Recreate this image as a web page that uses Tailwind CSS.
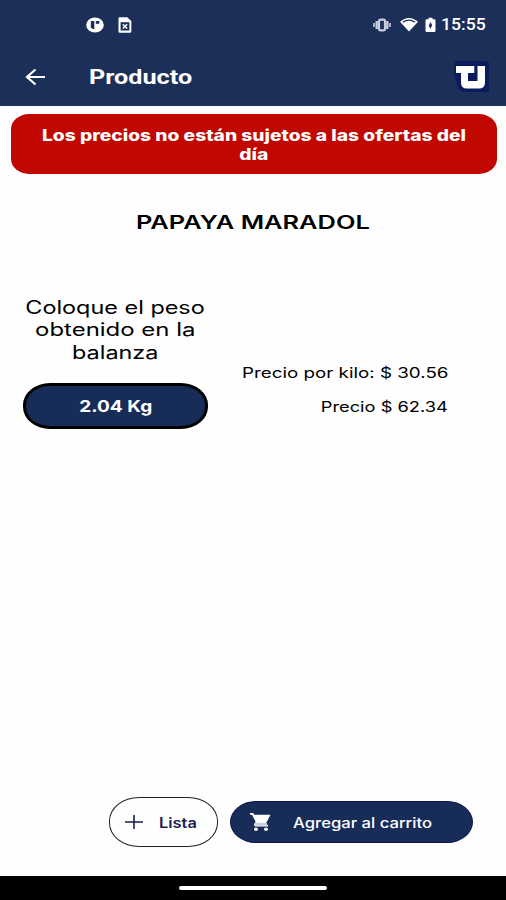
<!DOCTYPE html>
<html lang="es">
<head>
    <meta charset="UTF-8">
    <meta name="viewport" content="width=device-width, initial-scale=1.0">
    <title>Producto</title>
    <script src="https://cdn.jsdelivr.net/npm/@tailwindcss/browser@4"></script>
</head>
<body class="bg-white">
    <div class="w-[506px] h-[900px] flex flex-col overflow-hidden bg-[#fefefe] font-[Inter,sans-serif] text-black whitespace-nowrap">
        <header class="h-[105.5px] shrink-0 bg-[#1b2f58] text-white font-[Roboto,sans-serif]">
            <!-- Status bar -->
            <div class="h-[49px] flex items-center justify-between pl-[86px] pr-[20px]">
                <div class="flex items-center gap-[14px]">
                    <svg class="w-[18px] h-4" viewBox="0 0 18 16">
                        <ellipse cx="9" cy="8" rx="8.8" ry="7.6" fill="#fff"/>
                        <path d="M4.800 4h3.500v8.300q-2.500 0-3.500-1.800z" fill="#1b2f58"/>
                        <path d="M9.800 4h3.500v2.800H9.800z" fill="#1b2f58"/>
                    </svg>
                    <svg class="w-[14px] h-4" viewBox="0 0 14 16">
                        <path d="M.5 1.500Q.5.3 1.700.3h7.500L13.300 4v10.500q0 1.200-1.200 1.200H1.700q-1.200 0-1.200-1.200z" fill="#fff"/>
                        <path d="M2.600 5.200h8.800v8.300H2.600z" fill="#1b2f58"/>
                        <path d="m4.800 7.200 4.400 4.300m0-4.300-4.400 4.300" stroke="#fff" stroke-width="1.500"/>
                    </svg>
                </div>
                <div class="flex items-center">
                    <svg class="w-[18px] h-4" viewBox="0 0 18 16">
                        <path d="M3.700 4v8M14.300 4v8" stroke="#c8cede" stroke-width="2.400"/>
                        <path d="M1 6v4M17 6v4" stroke="#c8cede" stroke-width="1.600"/>
                        <rect x="6" y="2.600" width="6" height="10.800" rx="1.600" fill="none" stroke="#c8cede" stroke-width="2.200"/>
                    </svg>
                    <svg class="w-[18px] h-4 ml-[9px]" viewBox="0 0 18 16">
                        <path d="M0 4.800Q9-2.800 18 4.800L9 14.500z" fill="#fff"/>
                        <path d="M2.800 5.200Q9 1.200 15.200 5.200" fill="none" stroke="#1b2f58" stroke-width="1.300"/>
                    </svg>
                    <svg class="w-[11px] h-4 ml-[7px]" viewBox="0 0 11 16">
                        <path d="M3.500.8h4v1.500h1.800q1.200 0 1.200 1.200v10.300q0 1.200-1.200 1.200H1.700q-1.200 0-1.200-1.200V3.500q0-1.200 1.200-1.200h1.800z" fill="#fff"/>
                        <path d="m5.500 5-1.700 3.500 1.500 3.500 1.900-3.800z" fill="#1b2f58"/>
                    </svg>
                    <span class="ml-[5px] w-[45px] text-base leading-4 font-medium"><span class="inline-block origin-left scale-x-[1.1]">15:55</span></span>
                </div>
            </div>
            <!-- App bar -->
            <div class="h-[56px] flex items-center pl-[25px] pr-[16px]">
                <svg class="w-[21px] h-[18px]" viewBox="0 0 21 18" fill="none" stroke="#fff" stroke-width="2.200">
                    <path d="M20 9H2M10.500 1.500 2 9l8.500 7.500"/>
                </svg>
                <h1 class="ml-[43px] text-[21px] leading-6 font-bold"><span class="inline-block origin-left scale-x-[1.2]">Producto</span></h1>
                <svg class="w-[38px] h-[34px] ml-auto" viewBox="0 0 38 34">
                    <path d="M3 2q0-1 1-1h30q3 0 3 3v27q0 1-1 1H12q-5 0-6-6L2 15z" fill="#0c1b5e"/>
                    <path d="M4 6h18.300v7H16v8h9.500V6H33v16.500q0 6-6 6H15q-6 0-6-6V13H4z" fill="#fff"/>
                </svg>
            </div>
        </header>

        <main class="flex-1 flex flex-col">
            <div class="mt-[8.500px] ml-[10.500px] w-[486px] h-[60px] shrink-0 rounded-[18px/15px] bg-[#c00800] pt-[12px] flex flex-col items-center text-white text-[15.500px] leading-[19px] font-extrabold">
                <span class="scale-x-[1.24]">Los precios no están sujetos a las ofertas del</span>
                <span class="scale-x-[1.24]">día</span>
            </div>

            <h2 class="mt-[37px] h-6 text-center text-[18px] leading-6 font-semibold"><span class="inline-block scale-x-[1.41]">PAPAYA MARADOL</span></h2>

            <div class="mt-[62px] flex pl-[23px] pr-[58px] justify-between">
                <div class="w-[185px]">
                    <p class="flex flex-col items-center text-[18px] leading-[22.400px]">
                        <span class="scale-x-[1.3]">Coloque el peso</span>
                        <span class="scale-x-[1.33]">obtenido en la</span>
                        <span class="scale-x-[1.3]">balanza</span>
                    </p>
                    <button class="mt-[19px] w-[185px] h-[46px] flex items-center justify-center rounded-[27px/22px] border-3 border-black bg-[#182c58] text-white text-base font-bold">
                        <span class="scale-x-[1.19]">2.04 Kg</span>
                    </button>
                </div>
                <div class="pt-[59px] flex flex-col items-end text-[14.500px] leading-[33.500px]">
                    <span class="origin-right scale-x-[1.295]">Precio por kilo: $ 30.56</span>
                    <span class="origin-right scale-x-[1.26]">Precio $ 62.34</span>
                </div>
            </div>

            <div class="mt-auto mb-[29px] pl-[109px] flex items-center gap-3 text-[14px] font-medium">
                <button class="w-[109px] h-[50px] flex items-center rounded-[30px/24px] border border-[#222] pl-[15px] text-[#1b1d52]">
                    <svg class="w-[18px] h-[14px]" viewBox="0 0 18 14" stroke="#1b1d52" stroke-width="1.600">
                        <path d="M0 7h18M9 0v14"/>
                    </svg>
                    <span class="ml-[16px] origin-left scale-x-[1.17] font-semibold">Lista</span>
                </button>
                <button class="w-[243px] h-[42px] flex items-center rounded-[26px/21px] bg-[#182c58] border border-[#0b1450] pl-[19px] text-white">
                    <svg class="w-[21px] h-[18px]" viewBox="1 2 21 20" preserveAspectRatio="none" fill="#fff">
                        <path d="M1 2v2h2l3.600 7.590-1.350 2.450c-.16.28-.25.61-.25.96 0 1.100.9 2 2 2h12v-2H7.420l1.130-2h7.450c.75 0 1.410-.41 1.750-1.030L21.500 4H5.210l-.94-2z"/>
                        <path d="M6 13h12v3H6z" fill="#c9cfdd"/>
                        <circle cx="7" cy="20" r="2"/>
                        <circle cx="17" cy="20" r="2"/>
                    </svg>
                    <span class="ml-[22px] origin-left scale-x-[1.19]">Agregar al carrito</span>
                </button>
            </div>
        </main>

        <!-- Gesture bar -->
        <footer class="h-6 shrink-0 bg-black flex justify-center">
            <div class="mt-[10px] w-[148px] h-1 rounded-full bg-white"></div>
        </footer>
    </div>
</body>
</html>
